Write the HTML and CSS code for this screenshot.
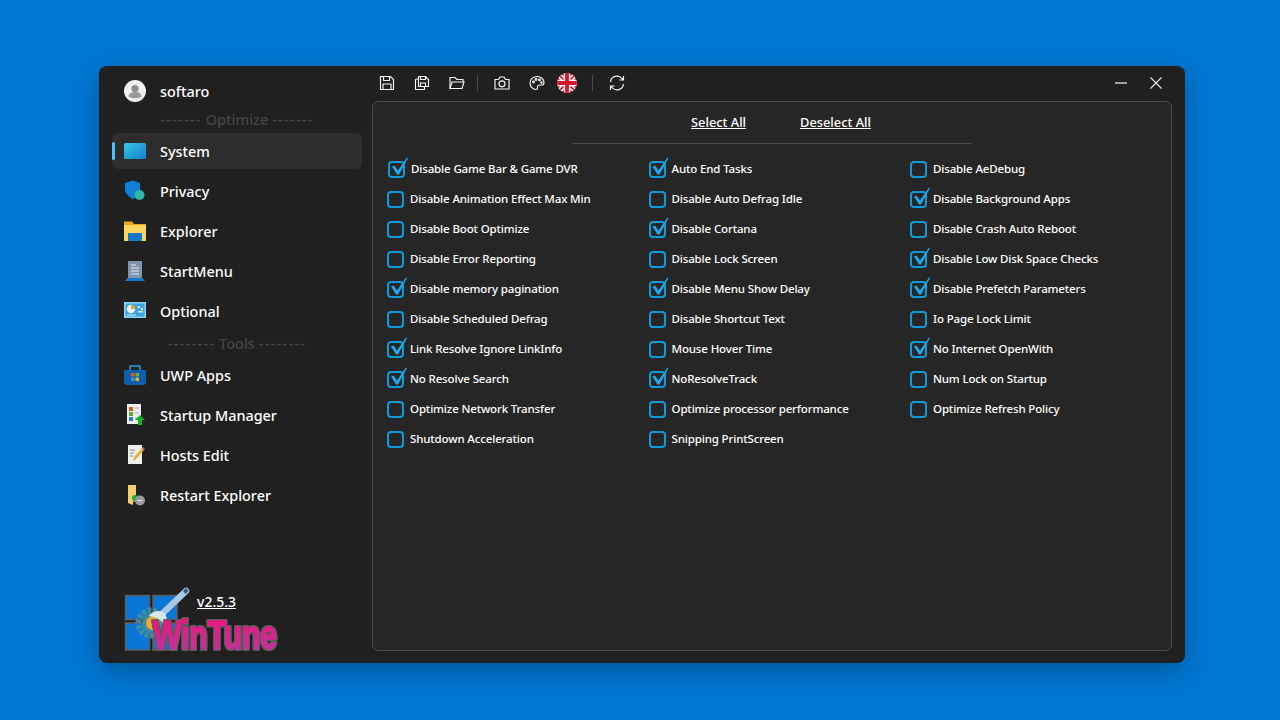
FILE: index.html
```html
<!DOCTYPE html>
<html lang="en">
<head>
<meta charset="utf-8">
<title>WinTune</title>
<link rel="stylesheet" href="styles.css">
</head>
<body>
<main class="window">
  <aside class="sidebar">
    <div class="user">
      <svg class="ico" viewBox="0 0 22 22"><circle cx="11" cy="11" r="11" fill="#f0f0f0"/><circle cx="11" cy="8.5" r="3.6" fill="#8c8c8c"/><path d="M4.500 16.500c0-3.200 3-4.500 6.500-4.500s6.500 1.300 6.500 4.500c-1.500 1.200-3.500 1.800-6.500 1.800s-5-.6-6.500-1.800z" fill="#9a9a9a"/></svg>
      <span>softaro</span>
    </div>
    <div class="divider"><span class="dash">-------</span> Optimize <span class="dash">-------</span></div>
    <nav class="nav">
      <a class="item active">
        <svg class="ico" viewBox="0 0 22 22"><defs><linearGradient id="sys" x1="0" y1="0" x2="1" y2="1"><stop offset="0" stop-color="#36c8e4"/><stop offset="1" stop-color="#1280cc"/></linearGradient></defs><rect y="3" width="22" height="16" rx="1.500" fill="url(#sys)"/></svg>
        <span>System</span>
      </a>
      <a class="item">
        <svg class="ico" viewBox="0 0 22 22"><path d="M1 3l8-2.500L16 3v7c0 4-3 7-7 9-3.500-1.500-7-5-8-9z" fill="#0e80d8"/><circle cx="15.500" cy="15" r="5" fill="#2cb8a4"/></svg>
        <span>Privacy</span>
      </a>
      <a class="item">
        <svg class="ico" viewBox="0 0 22 22"><path d="M0 1.500h8l2 2.500h12v3H0z" fill="#e8a91e"/><rect y="5" width="22" height="16" fill="#fcd55c"/><rect x="4" y="13" width="14" height="8" rx="1" fill="#1478c8"/></svg>
        <span>Explorer</span>
      </a>
      <a class="item">
        <svg class="ico" viewBox="0 0 22 22"><rect x="4" y="1" width="14" height="17" fill="#8094b0"/><path d="M7 5h5M7 8h8M7 11h8M7 14h8" stroke="#e4e9f0" stroke-width="1.200"/><path d="M1 21l2.500-3h15l2.500 3z" fill="#1678c8"/></svg>
        <span>StartMenu</span>
      </a>
      <a class="item">
        <svg class="ico" viewBox="0 0 22 22"><rect y="2" width="22" height="16" fill="#8fd4f0"/><rect x="1.500" y="3.500" width="19" height="13" fill="#3ea4dc"/><circle cx="7" cy="9" r="4.200" fill="#e8f4fb"/><path d="M7 9V4.800a4.200 4.200 0 0 1 4.200 4.200z" fill="#f0a030"/><path d="M14 6h2v2h-2zM17 8h2v2h-2zM14 11h5v1.500h-5zM3 14.500h9v1H3z" fill="#d0ecfa"/></svg>
        <span>Optional</span>
      </a>
    </nav>
    <div class="divider"><span class="dash">--------</span> Tools <span class="dash">--------</span></div>
    <nav class="nav">
      <a class="item">
        <svg class="ico" viewBox="0 0 22 22"><path d="M6 6V2h10v4" fill="none" stroke="#2c9ce0" stroke-width="1.500"/><path d="M0 6h22v12a3 3 0 0 1-3 3H3a3 3 0 0 1-3-3z" fill="#0d5fae"/><path d="M7 9h3.500v3.500H7z" fill="#e8552c"/><path d="M11.500 9H15v3.500h-3.500z" fill="#68b030"/><path d="M7 13.500h3.500V17H7z" fill="#2a9ce8"/><path d="M11.500 13.500H15V17h-3.500z" fill="#f0b020"/></svg>
        <span>UWP Apps</span>
      </a>
      <a class="item">
        <svg class="ico" viewBox="0 0 22 22"><rect x="3" y="0" width="14" height="20" fill="#eef0f0"/><path d="M5 3h4v4H5z" fill="#e8552c"/><path d="M5 8h4v4H5z" fill="#58a838"/><path d="M5 13h4v4H5z" fill="#2a80d0"/><path d="M11 4h4M11 9h4M11 14h3" stroke="#a8b0b8"/><path d="M16 11l5 5h-3v5h-4v-5h-3z" fill="#10b020"/></svg>
        <span>Startup Manager</span>
      </a>
      <a class="item">
        <svg class="ico" viewBox="0 0 22 22"><rect x="4" y="1" width="14" height="19" fill="#eeeeea"/><path d="M6 6h5M6 9h4M6 12h3" stroke="#8a8a8a"/><path d="M9 17l1-4 8-9 2 2-8 9z" fill="#e8b030"/><path d="M18 4l1-1 2 2-1 1z" fill="#d86060"/></svg>
        <span>Hosts Edit</span>
      </a>
      <a class="item">
        <svg class="ico" viewBox="0 0 22 22"><path d="M4 1h8v16l-3 1v3l-5-2z" fill="#f4d070"/><circle cx="11" cy="14" r="3" fill="#20a848"/><circle cx="16" cy="16.500" r="5" fill="#9a9a9a"/><path d="M13.500 16.500h5" stroke="#dddddd" stroke-width="1.200"/></svg>
        <span>Restart Explorer</span>
      </a>
    </nav>
    <div class="brand">
      <svg class="brand-art" viewBox="0 0 156 66">
        <defs>
          <linearGradient id="wm" x1="0" y1="0" x2="0" y2="1"><stop offset="0" stop-color="#f8107c"/><stop offset="1" stop-color="#b43aa0"/></linearGradient>
        </defs>
        <g fill="#0a76d8" stroke="#5f5f5f" stroke-width="1.500">
          <rect x="1.500" y="10.500" width="24" height="24"/>
          <rect x="29" y="10.500" width="24" height="24"/>
          <rect x="1.500" y="38" width="24" height="27"/>
          <rect x="29" y="38" width="24" height="27"/>
        </g>
        <circle cx="27" cy="38" r="12.500" fill="none" stroke="#3d8ca0" stroke-width="6" stroke-dasharray="4 1.500"/>
        <circle cx="28" cy="38" r="10" fill="#3d8ca0"/>
        <circle cx="29" cy="38" r="7" fill="#f0a830"/>
        <path d="M39 28L62 6" stroke="#a8c8e4" stroke-width="6.500" stroke-linecap="round"/>
        <path d="M62 3l2.500 3-3 3-2.500-3z" fill="#3a5a78"/>
        <path d="M25 31c3-5 12-7 16-2 3 4 2 9-1 12-2-6-7-9-15-10z" fill="#d8e6f0"/>
        <text class="wordmark" x="29" y="64" textLength="124" lengthAdjust="spacingAndGlyphs">WinTune</text>
      </svg>
      <a class="version">v2.5.3</a>
    </div>
  </aside>
  <section class="content">
    <header class="titlebar">
      <div class="tools">
        <svg class="tool" viewBox="0 0 16 16"><path d="M1.500 1.500h10l3 3v10h-13z"/><path d="M4.500 1.500v4h6v-4M4 14.500V9h8v5.500"/></svg>
        <svg class="tool t-gap" viewBox="0 0 16 16"><path d="M4.500 1.500h7l3 3v7h-10z"/><path d="M6.500 1.500v3h5v-3M6.500 11.500V8h5v3.500"/><path d="M4.500 4H2.500A1 1 0 0 0 1.500 5v9.500h9v-3"/></svg>
        <svg class="tool t-gap" viewBox="0 0 16 16"><path d="M1 13.500v-11h5l2 2h6V7"/><path d="M1 13.500l2-6.500h12l-2 6.500z"/></svg>
        <span class="sep"></span>
        <svg class="tool" viewBox="0 0 16 16"><path d="M1 4.500h3.500l1.500-2.500h4l1.500 2.500H15v9.500H1z"/><circle cx="8" cy="8.800" r="3"/></svg>
        <svg class="tool t-gap" viewBox="0 0 16 16"><path d="M8 1.500C4 1.500 1 4.500 1 8s3 6.500 6 6.500c2 0 1.500-2 1.500-3s1-1.500 2.500-1.500h2c1 0 2-1 2-2.500 0-3.500-3.500-6-6.500-6z"/><circle cx="4.500" cy="7" r=".9"/><circle cx="7" cy="4.500" r=".9"/><circle cx="10.500" cy="5" r=".9"/><circle cx="12.500" cy="7.500" r=".6"/></svg>
        <svg class="flag" viewBox="0 0 20 20"><defs><clipPath id="fc"><circle cx="10" cy="10" r="10"/></clipPath></defs><g clip-path="url(#fc)"><rect width="20" height="20" fill="#d8162c"/><path d="M0 0l20 20M20 0L0 20" stroke="#f4f4f4" stroke-width="5"/><path d="M0 0l20 20M20 0L0 20" stroke="#d8162c" stroke-width="1.600"/><path d="M10 0v20M0 10h20" stroke="#f4f4f4" stroke-width="6.500"/><path d="M10 0v20M0 10h20" stroke="#d8162c" stroke-width="3.800"/></g></svg>
        <span class="sep sep-wide"></span>
        <svg class="tool" viewBox="0 0 16 16"><path d="M1.500 7A6.500 6.500 0 0 1 13 3.500L14.500 5M14.500 1v4h-4"/><path d="M14.500 9A6.500 6.500 0 0 1 3 12.500L1.500 11M1.500 15v-4h4"/></svg>
      </div>
      <div class="winctl">
        <svg class="ctl" viewBox="0 0 12 12"><path d="M0 6h12" stroke-width="1.300"/></svg>
        <svg class="ctl ctl-x" viewBox="0 0 12 12"><path d="M.5.500l11 11M11.500.500l-11 11"/></svg>
      </div>
    </header>
    <div class="panel">
      <div class="actions">
        <a>Select All</a>
        <a>Deselect All</a>
      </div>
      <div class="rule"></div>
      <div class="grid">
        <label class="opt on first"><span class="box"></span>Disable Game Bar &amp; Game DVR</label>
        <label class="opt on"><span class="box"></span>Auto End Tasks</label>
        <label class="opt"><span class="box"></span>Disable AeDebug</label>
        <label class="opt"><span class="box"></span>Disable Animation Effect Max Min</label>
        <label class="opt"><span class="box"></span>Disable Auto Defrag Idle</label>
        <label class="opt on"><span class="box"></span>Disable Background Apps</label>
        <label class="opt"><span class="box"></span>Disable Boot Optimize</label>
        <label class="opt on"><span class="box"></span>Disable Cortana</label>
        <label class="opt"><span class="box"></span>Disable Crash Auto Reboot</label>
        <label class="opt"><span class="box"></span>Disable Error Reporting</label>
        <label class="opt"><span class="box"></span>Disable Lock Screen</label>
        <label class="opt on"><span class="box"></span>Disable Low Disk Space Checks</label>
        <label class="opt on"><span class="box"></span>Disable memory pagination</label>
        <label class="opt on"><span class="box"></span>Disable Menu Show Delay</label>
        <label class="opt on"><span class="box"></span>Disable Prefetch Parameters</label>
        <label class="opt"><span class="box"></span>Disable Scheduled Defrag</label>
        <label class="opt"><span class="box"></span>Disable Shortcut Text</label>
        <label class="opt"><span class="box"></span>Io Page Lock Limit</label>
        <label class="opt on"><span class="box"></span>Link Resolve Ignore LinkInfo</label>
        <label class="opt"><span class="box"></span>Mouse Hover Time</label>
        <label class="opt on"><span class="box"></span>No Internet OpenWith</label>
        <label class="opt on"><span class="box"></span>No Resolve Search</label>
        <label class="opt on"><span class="box"></span>NoResolveTrack</label>
        <label class="opt"><span class="box"></span>Num Lock on Startup</label>
        <label class="opt"><span class="box"></span>Optimize Network Transfer</label>
        <label class="opt"><span class="box"></span>Optimize processor performance</label>
        <label class="opt"><span class="box"></span>Optimize Refresh Policy</label>
        <label class="opt"><span class="box"></span>Shutdown Acceleration</label>
        <label class="opt"><span class="box"></span>Snipping PrintScreen</label>
      </div>
    </div>
  </section>
</main>
</body>
</html>
```
FILE: styles.css
```css
* { box-sizing: border-box; }
html, body { margin: 0; height: 100%; }
body {
  background: #0078d4;
  font-family: "Noto Sans", "Open Sans", sans-serif;
  overflow: hidden;
  padding: 66px 0 0 99px;
}
.window {
  width: 1086px;
  height: 597px;
  background: #202020;
  border-radius: 8px;
  box-shadow: 0 8px 28px rgba(0, 0, 0, .28);
  display: flex;
  color: #fff;
}
.sidebar {
  width: 273px;
  flex: none;
  padding: 0 10px 0 13px;
  display: flex;
  flex-direction: column;
  position: relative;
}
.ico { width: 22px; height: 22px; flex: none; }
.user {
  height: 50px;
  display: flex;
  align-items: center;
  gap: 14px;
  padding-left: 12px;
  font-size: 14.400px;
  font-weight: 500;
}
.divider {
  font-size: 14.500px;
  font-weight: 500;
  color: #454545;
  text-align: center;
  white-space: nowrap;
}
.dash { letter-spacing: 1.300px; }
.nav { display: flex; flex-direction: column; gap: 4px; }
.user + .divider { margin: -4px 0 7px; height: 14px; line-height: 14px; }
.nav + .divider { margin: 4px 0; height: 20px; line-height: 20px; }
.item {
  height: 36px;
  border-radius: 6px;
  display: flex;
  align-items: center;
  gap: 14px;
  padding-left: 12px;
  font-size: 14.400px;
  font-weight: 500;
  position: relative;
}
.item.active { background: #2d2d2d; }
.item.active::before {
  content: "";
  position: absolute;
  left: 0;
  top: 9px;
  width: 3px;
  height: 18px;
  border-radius: 2px;
  background: #4cc2ff;
}
.brand {
  margin-top: auto;
  height: 77px;
  margin-bottom: 12px;
  position: relative;
}
.brand-art { width: 156px; height: 66px; position: absolute; left: 12px; top: 11px; overflow: visible; }
.version {
  position: absolute;
  left: 85px;
  top: 18px;
  font-size: 14px;
  font-weight: 500;
  text-decoration: underline;
  color: #fff;
}
.wordmark {
  font-family: "Liberation Sans", sans-serif;
  font-size: 41px;
  font-weight: 700;
  fill: url(#wm);
  stroke: url(#wm);
  stroke-width: 1.500;
  filter: drop-shadow(1px 0 0 #5c5c5c) drop-shadow(-1px 0 0 #5c5c5c) drop-shadow(0 1px 0 #5c5c5c) drop-shadow(0 -1px 0 #5c5c5c);
}
.content { flex: 1; display: flex; flex-direction: column; padding-right: 13px; min-width: 0; }
.titlebar {
  height: 35px;
  flex: none;
  display: flex;
  align-items: center;
  justify-content: space-between;
  padding-bottom: 2px;
}
.tools { display: flex; align-items: center; padding-left: 7px; }
.tool {
  width: 16px;
  height: 16px;
  fill: none;
  stroke: #f6f6f6;
  stroke-width: 1.150;
  flex: none;
}
.t-gap { margin-left: 19px; }
.flag { width: 20px; height: 20px; margin-left: 12px; flex: none; }
.sep { width: 1px; height: 16px; background: #4a4a4a; margin: 0 16px 0 12px; flex: none; }
.sep-wide { margin: 0 16px 0 15px; }
.winctl { display: flex; align-items: center; gap: 23px; padding-right: 10px; }
.ctl { width: 12px; height: 12px; stroke: #e8e8e8; stroke-width: 1.100; fill: none; flex: none; }
.panel {
  flex: 1;
  margin-bottom: 12px;
  background: #262626;
  border: 1px solid #4a4a4a;
  border-radius: 6px;
  min-height: 0;
}
.actions {
  display: flex;
  justify-content: center;
  gap: 54px;
  height: 41px;
  padding: 0 0 2px 18px;
  align-items: center;
  font-size: 12.800px;
  font-weight: 500;
}
.actions a { text-decoration: underline; color: #fff; }
.rule { width: 400px; height: 1px; background: #4a4a4a; margin: 0 auto 9px; }
.grid {
  display: grid;
  grid-template-columns: repeat(3, 261.500px);
  grid-auto-rows: 30px;
  padding-left: 14px;
}
.opt {
  display: flex;
  align-items: center;
  gap: 6px;
  font-size: 11.500px;
  font-weight: 500;
  letter-spacing: -.14px;
  color: #fff;
  white-space: nowrap;
}
.box {
  width: 17px;
  height: 17px;
  margin-top: 2px;
  border: 2px solid #0f9ad8;
  border-radius: 4px;
  flex: none;
  position: relative;
}
.on .box::after {
  content: "";
  position: absolute;
  left: -2px;
  top: -7px;
  width: 24px;
  height: 24px;
  background: #1fa8ec;
  clip-path: polygon(4px 11px, 6.500px 10px, 10px 15px, 19px 2px, 20px 2.500px, 11px 19px, 9px 19px);
}
.first .box { margin-left: 1px; }
```
